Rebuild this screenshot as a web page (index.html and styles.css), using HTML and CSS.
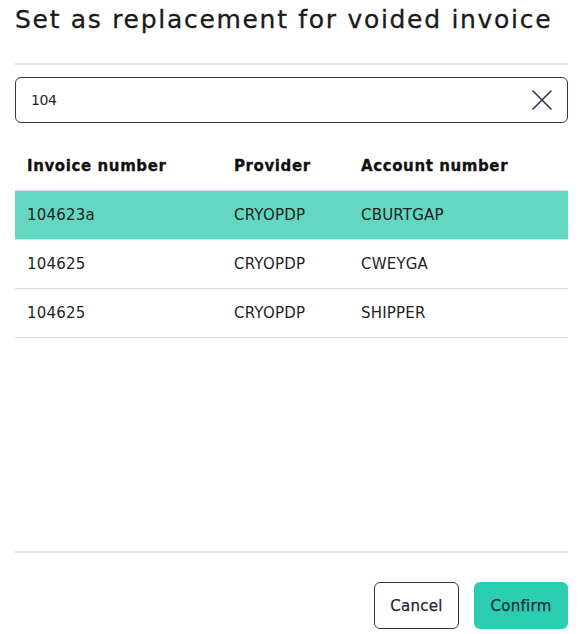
FILE: index.html
```html
<!DOCTYPE html>
<html>
<head>
<meta charset="utf-8">
<link rel="stylesheet" href="styles.css">
</head>
<body>
<div class="dialog">
  <h1 class="title">Set as replacement for voided invoice</h1>
  <div class="divider"></div>
  <div class="search">
    <span class="search-value">104</span>
    <svg class="clear" width="20" height="20" viewBox="0 0 20 20"><path d="M1 1 L19 19 M19 1 L1 19" stroke="#2a3450" stroke-width="1.6" fill="none" stroke-linecap="round"/></svg>
  </div>
  <div class="table">
    <div class="row head">
      <div>Invoice number</div><div>Provider</div><div>Account number</div>
    </div>
    <div class="row selected">
      <div>104623a</div><div>CRYOPDP</div><div>CBURTGAP</div>
    </div>
    <div class="row">
      <div>104625</div><div>CRYOPDP</div><div>CWEYGA</div>
    </div>
    <div class="row">
      <div>104625</div><div>CRYOPDP</div><div>SHIPPER</div>
    </div>
  </div>
  <div class="footer">
    <button class="btn btn-cancel">Cancel</button>
    <button class="btn btn-confirm">Confirm</button>
  </div>
</div>
</body>
</html>
```
FILE: styles.css
```css
html, body {
  margin: 0;
  padding: 0;
  background: #ffffff;
}
body {
  font-family: "DejaVu Sans", "Liberation Sans", sans-serif;
  color: #1f1f1f;
}
.dialog {
  height: 634px;
  box-sizing: border-box;
  padding: 5px 13px 5px 15px;
  display: flex;
  flex-direction: column;
}
.title {
  margin: 0;
  font-size: 25px;
  line-height: 30px;
  font-weight: 400;
  letter-spacing: 1.7px;
  color: #1a1a1a;
  -webkit-text-stroke: 0.3px #1a1a1a;
}
.divider {
  margin-top: 28px;
  height: 2px;
  background: #e4e4e4;
}
.search {
  margin-top: 12px;
  height: 46px;
  box-sizing: border-box;
  border: 1.5px solid #2a3450;
  border-radius: 6px;
  display: flex;
  align-items: center;
  justify-content: space-between;
  padding: 0 15px 0 15px;
}
.search-value {
  font-size: 14px;
  letter-spacing: -0.4px;
  color: #1e2536;
}
.clear {
  display: block;
}
.table {
  margin-top: 19px;
}
.row {
  display: grid;
  grid-template-columns: 207px 127px 1fr;
  padding-left: 12px;
  height: 49px;
  box-sizing: border-box;
  align-items: center;
  font-size: 15px;
  letter-spacing: 0.2px;
  border-bottom: 1px solid #dedede;
  color: #1f1f1f;
}
.row.head {
  font-weight: 700;
  font-size: 15px;
  letter-spacing: 0.6px;
  color: #111111;
  -webkit-text-stroke: 0.3px #111111;
  border-bottom: 1.5px solid #e2e2e2;
}
.row.selected {
  background: #63d7c1;
}
.footer {
  margin-top: auto;
  border-top: 2px solid #e4e4e4;
  padding-top: 29px;
  display: flex;
  justify-content: flex-end;
  gap: 15px;
}
.btn {
  height: 47px;
  box-sizing: border-box;
  border-radius: 6px;
  font-family: "DejaVu Sans", "Liberation Sans", sans-serif;
  font-size: 15px;
  font-weight: 400;
  letter-spacing: 0.3px;
  color: #1b2638;
  -webkit-text-stroke: 0.25px #1b2638;
  cursor: pointer;
}
.btn-cancel {
  width: 85px;
  background: #ffffff;
  border: 1.5px solid #2a3450;
}
.btn-confirm {
  width: 94px;
  background: #2ccdb0;
  border: none;
  color: #16304a;
}
```
